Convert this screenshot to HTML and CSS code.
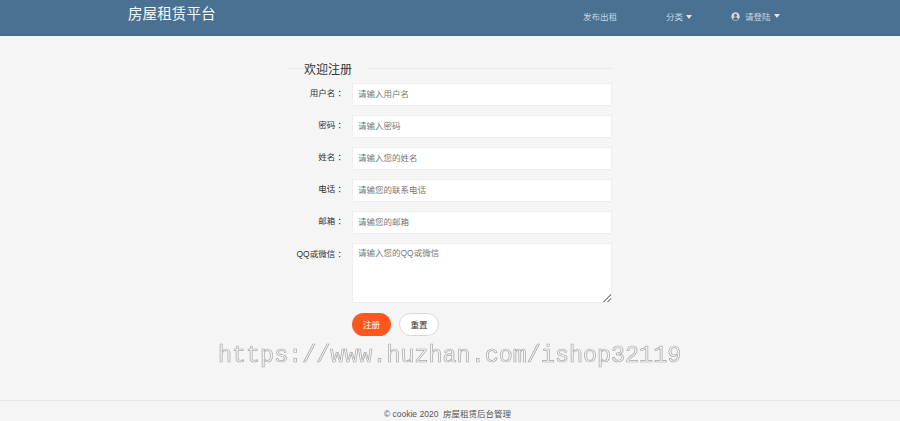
FILE: index.html
```html
<!DOCTYPE html>
<html lang="zh-CN">
<head>
    <meta charset="UTF-8">
    <title>房屋租赁平台</title>
    <link rel="stylesheet" href="styles.css">
</head>
<body>

    <div class="navbar">
        <div class="brand">房屋租赁平台</div>
        <div class="nav-links">
            <a class="nav-publish">发布出租</a>
            <a class="nav-category">分类<span class="caret"></span></a>
            <a class="nav-login">
                <svg class="user-icon" viewBox="0 0 16 16">
                    <circle cx="8" cy="8" r="7.500" fill="#c9d6e0"/>
                    <circle cx="8" cy="6.200" r="2.600" fill="#4a7191"/>
                    <path d="M3.400 12.400c1-2 2.800-2.900 4.600-2.900s3.600.9 4.600 2.900C11.400 13.800 9.800 14.500 8 14.500s-3.400-.7-4.600-2.100z" fill="#4a7191"/>
                </svg>
                请登陆<span class="caret"></span>
            </a>
        </div>
    </div>

    <div class="container">
        <div class="legend"><span>欢迎注册</span></div>
        <form class="register-form">
            <div class="form-row">
                <label>用户名 ：</label>
                <input type="text" placeholder="请输入用户名">
            </div>
            <div class="form-row">
                <label>密码 ：</label>
                <input type="text" placeholder="请输入密码">
            </div>
            <div class="form-row">
                <label>姓名 ：</label>
                <input type="text" placeholder="请输入您的姓名">
            </div>
            <div class="form-row">
                <label>电话 ：</label>
                <input type="text" placeholder="请输您的联系电话">
            </div>
            <div class="form-row">
                <label>邮箱 ：</label>
                <input type="text" placeholder="请输您的邮箱">
            </div>
            <div class="form-row">
                <label class="label-tall">QQ或微信 ：</label>
                <textarea placeholder="请输入您的QQ或微信"></textarea>
            </div>
            <div class="form-buttons">
                <button type="button" class="btn-submit">注册</button>
                <button type="button" class="btn-reset">重置</button>
            </div>
        </form>
    </div>

    <div class="footer">© cookie 2020 &nbsp;房屋租赁后台管理</div>

    <div class="watermark">https://www.huzhan.com/ishop32119</div>

</body>
</html>
```

FILE: styles.css
```css
/* Basic page styles */
* {
    box-sizing: border-box;
}
html, body {
    height: 100%;
}
body {
    margin: 0;
    background-color: #f5f5f5;
    color: #333;
    font-family: "Liberation Sans", "Noto Sans CJK SC", sans-serif;
    font-size: 8.500px;
    display: flex;
    flex-direction: column;
    position: relative;
    overflow: hidden;
}
.navbar {
    height: 36px;
    padding: 0 0 0 128px;
    background-color: #4a7191;
    border-bottom: 1px solid #486c8a;
    display: flex;
    justify-content: space-between;
    align-items: center;
}
.brand {
    color: #f4f7f9;
    font-size: 14.600px;
    margin-top: -11px;
}
.nav-links {
    display: flex;
    align-items: center;
    color: #c9d6e0;
    margin-right: 120px;
    margin-top: -3px;
}
.nav-publish {
    margin-right: 49px;
}
.nav-category {
    margin-right: 39px;
}
.nav-login {
    display: flex;
    align-items: center;
}
.user-icon {
    width: 9px;
    height: 9px;
    margin-right: 4.500px;
}
.caret {
    display: inline-block;
    margin-left: 3.500px;
    border-top: 4px solid #dfe6ec;
    border-left: 3.500px solid transparent;
    border-right: 3.500px solid transparent;
    vertical-align: 1px;
}
.container {
    flex: 1;
    width: 324px;
    margin-left: 288px;
    padding-top: 24px;
}
.legend {
    height: 16px;
    display: flex;
    align-items: center;
    font-size: 12px;
    color: #333;
    margin-bottom: 7px;
}
.legend::before {
    content: "";
    width: 15px;
    border-top: 1px solid #eaeaea;
}
.legend::after {
    content: "";
    flex: 1;
    border-top: 1px solid #eaeaea;
}
.legend span {
    padding: 0 1px;
    margin-right: 14px;
}
.form-row {
    display: flex;
    align-items: flex-start;
    margin-bottom: 9px;
}
.form-row label {
    width: 58px;
    margin-right: 6px;
    line-height: 21px;
    text-align: right;
    white-space: nowrap;
}
.form-row .label-tall {
    line-height: 23px;
}
.form-row input,
.form-row textarea {
    width: 260px;
    height: 23px;
    padding: 0 5px 2px;
    border: 1px solid #eee;
    border-radius: 1px;
    background-color: #fff;
    font-family: inherit;
    font-size: 8.500px;
    color: #333;
    outline: none;
    display: block;
}
.form-row textarea {
    height: 60px;
    padding: 2px 5px;
    margin: 0;
}
.form-row textarea::-webkit-resizer {
    background: linear-gradient(135deg, transparent 72%, #999 72%, #999 77%, transparent 77%, transparent 86%, #999 86%, #999 91%, transparent 91%);
}
.form-row input::placeholder,
.form-row textarea::placeholder {
    color: #777;
    opacity: 1;
}
.form-buttons {
    display: flex;
    gap: 8px;
    margin: 10px 0 0 64px;
}
.form-buttons button {
    height: 23px;
    border-radius: 12px;
    font-family: inherit;
    font-size: 8.500px;
    padding: 0 0 2px;
}
.btn-submit {
    width: 39px;
    background-color: #ff5722;
    border: none;
    color: #fff;
}
.btn-reset {
    width: 40px;
    background-color: #fff;
    border: 1px solid #d9d9d9;
    color: #333;
}
.footer {
    height: 21px;
    padding-right: 5px;
    border-top: 1px solid #e6e6e6;
    text-align: center;
    line-height: 27px;
    color: #555;
    overflow: hidden;
}
/* site watermark, lies over the page */
.watermark {
    position: absolute;
    left: 218px;
    top: 342px;
    font-family: "Liberation Mono", monospace;
    font-size: 23.400px;
    line-height: 28px;
    color: #f5f5f5;
    -webkit-text-stroke: 0.700px #a8a8a8;
    white-space: nowrap;
    will-change: opacity;
    opacity: 0.99;
}
```
